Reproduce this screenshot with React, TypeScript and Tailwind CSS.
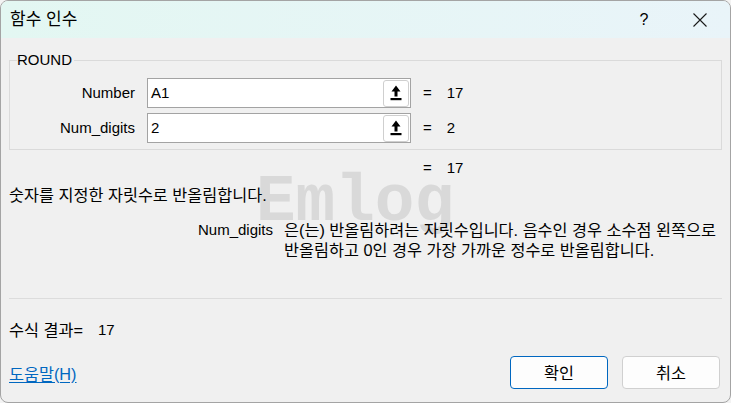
import React from "react";

const FONT = '"Liberation Sans", "Noto Sans CJK KR", sans-serif';

function RefIcon() {
  return (
    <svg width="12" height="16" viewBox="0 0 12 16" aria-hidden="true">
      <path d="M6 0.5 L10.5 6.5 L7.5 6.5 L7.5 11.5 L4.5 11.5 L4.5 6.5 L1.5 6.5 Z" fill="#000" />
      <rect x="0.5" y="13" width="11" height="2.2" fill="#000" />
    </svg>
  );
}

function ArgRow({ label, value, result }: { label: string; value: string; result: string }) {
  return (
    <div className="flex items-center h-[30px]">
      <div className="w-[118px] text-right">{label}</div>
      <div className="ml-[12px] w-[264px] h-[30px] border border-[#a3a3a3] bg-white flex items-center">
        <span className="flex-1 pl-[3px]">{value}</span>
        <button className="w-[26px] h-[27px] mr-px rounded-[3px] border border-[#cfcfcf] bg-white flex items-center justify-center">
          <RefIcon />
        </button>
      </div>
      <span className="ml-[12px]">=</span>
      <span className="ml-[15px]">{result}</span>
    </div>
  );
}

export default function App() {
  return (
    <div className="w-[731px] h-[403px] bg-[#f3f3f3]" style={{ fontFamily: FONT }}>
      <div className="relative w-[731px] h-[403px] rounded-[8px] border border-[#a4a4a4] overflow-hidden flex flex-col bg-[#f0f0f0] text-[15px] leading-[20px] text-black">
        {/* title bar */}
        <div className="h-[37px] shrink-0 flex items-center bg-gradient-to-r from-[#e3f7f2] to-[#e9f4f9]">
          <div className="pl-[9px] flex-1 text-[17px] leading-[22px]">함수 인수</div>
          <div className="w-[56px] h-full flex items-center justify-center text-[16px]">?</div>
          <div className="w-[56px] h-full flex items-center justify-center mr-[2px]">
            <svg width="14" height="14" viewBox="0 0 14 14" aria-hidden="true">
              <path d="M0.5 0.5 L13.5 13.5 M13.5 0.5 L0.5 13.5" stroke="#1a1a1a" strokeWidth="1.1" />
            </svg>
          </div>
        </div>

        {/* watermark */}
        <div
          className="absolute left-[255px] top-[180px] text-[66px] leading-[44px] font-bold text-[#d9d9d9] pointer-events-none select-none"
          style={{ fontFamily: '"Liberation Mono", monospace' }}
        >
          Emlog
        </div>

        {/* body */}
        <div className="relative flex-1 flex flex-col px-[8px]">
          <fieldset className="mt-[12px] border border-[#dadada] pl-[7px] pr-[7px] pt-[8px] pb-[6px] flex flex-col gap-[5px]">
            <legend className="px-0 pr-[2px] leading-[20px]">ROUND</legend>
            <ArgRow label="Number" value="A1" result="17" />
            <ArgRow label="Num_digits" value="2" result="2" />
          </fieldset>

          <div className="mt-[8px] pl-[414px] flex">
            <span>=</span>
            <span className="ml-[15px]">17</span>
          </div>

          <div className="mt-[7px] text-[16.3px]">숫자를 지정한 자릿수로 반올림합니다.</div>

          <div className="mt-[15px] flex">
            <div className="w-[264px] text-right">Num_digits</div>
            <div className="ml-[11px] text-[16.3px]">
              은(는) 반올림하려는 자릿수입니다. 음수인 경우 소수점 왼쪽으로
              <br />
              반올림하고 0인 경우 가장 가까운 정수로 반올림합니다.
            </div>
          </div>

          <div className="mt-[38px] h-px bg-[#dcdcdc]" />

          <div className="mt-[21px] flex">
            <span className="w-[89px] text-[16.3px]">수식 결과=</span>
            <span>17</span>
          </div>

          <div className="mt-[16px] flex items-center pr-[2px]">
            <a className="flex-1 text-[#0067c0] text-[16.3px] underline underline-offset-2 pt-[2px]" href="#">
              도움말(H)
            </a>
            <button className="w-[98px] h-[33px] rounded-[4px] border border-[#0067c0] bg-[#fdfdfd] text-[16.3px]">확인</button>
            <button className="ml-[14px] w-[98px] h-[33px] rounded-[4px] border border-[#d0d0d0] bg-[#fdfdfd] text-[16.3px]">취소</button>
          </div>
        </div>
      </div>
    </div>
  );
}
